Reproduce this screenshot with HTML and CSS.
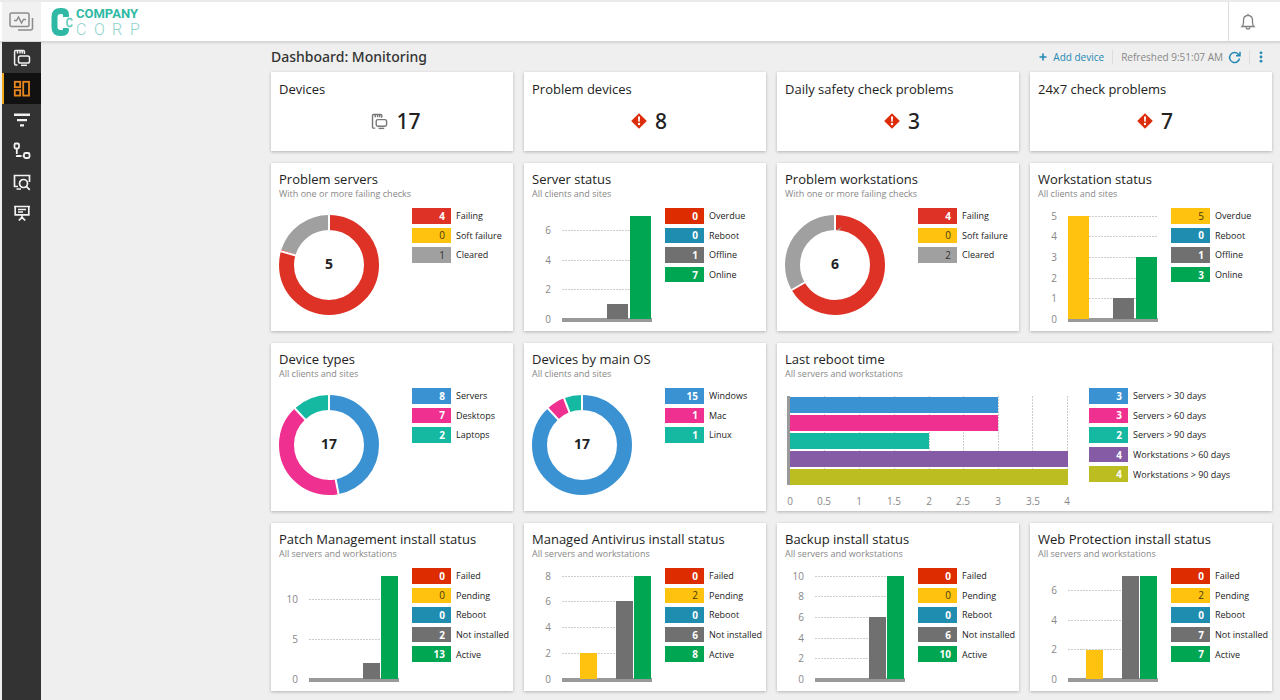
FILE: index.html
```html
<!DOCTYPE html>
<html lang="en">
<head>
<meta charset="utf-8">
<meta name="viewport" content="width=device-width, initial-scale=1">
<title>Dashboard: Monitoring</title>
<link rel="stylesheet" href="styles.css">
</head>
<body>
<svg class="defs" width="0" height="0" aria-hidden="true">
  <symbol id="alert" viewBox="0 0 16 16"><path d="M8 .2 15.8 8 8 15.8.2 8Z" fill="#dc2c0c"/><path d="M7 3.600h2l-.3 5.200H7.300Z" fill="#fff"/><circle cx="8" cy="11" r="1.200" fill="#fff"/></symbol>
  <symbol id="devices" viewBox="0 0 18 18"><g fill="none" stroke="currentColor" stroke-width="1.500"><path d="M4.500 16H2.600q-1 0-1-1V2.600q0-1 1-1h7.800q1 0 1 1V5M4.500 2v2.500M7 2v2.500M9.200 2v2.500"/><rect x="5.500" y="7" width="11" height="7" rx="1.800"/><path d="M8 16.300h6"/></g></symbol>
</svg>
<header class="topbar">
  <a class="product" href="#" aria-label="Monitoring">
    <svg width="25" height="20" viewBox="0 0 25 20" fill="none" stroke="#8c8c8c" stroke-width="1.500"><rect x="1" y="1" width="19" height="13.500" rx="1.500"/><path d="M5 8.500h2.500L9.500 5l3 6 2-3.500h2.500"/><path d="M23.500 6v10q0 2-2 2H9"/></svg>
  </a>
  <a class="brand" href="#" aria-label="Company Corp">
    <svg width="92" height="32" viewBox="0 0 92 32">
      <path d="M15 11V9q0-4-4-4H9.500Q3.500 5 3.500 11v10q0 6 6 6H11q4 0 4-4v-1" fill="none" stroke="#2fb9a5" stroke-width="6"/>
      <path d="M21 14.500q-.4-2-2.300-2-2.700 0-2.700 4t2.700 4q1.900 0 2.300-2" fill="none" stroke="#fff" stroke-width="4"/>
      <path d="M21 14.500q-.4-2-2.300-2-2.700 0-2.700 4t2.700 4q1.900 0 2.300-2" fill="none" stroke="#6fcfc2" stroke-width="1.800"/>
      <text class="brand-name" x="25" y="12">COMPANY</text>
      <text class="brand-sub" x="25 43 61 79" y="29">CORP</text>
    </svg>
  </a>
  <button class="bell" type="button" aria-label="Notifications">
    <svg width="16" height="18" viewBox="0 0 16 18" fill="none" stroke="#808080" stroke-width="1.300"><path d="M2 13.500q1.500-1.500 1.500-4V7Q3.500 2.800 8 2.300q4.500.5 4.500 4.700v2.500q0 2.500 1.500 4ZM8 .8v1.500M6 14.500q.4 1.600 2 1.600t2-1.600"/></svg>
  </button>
</header>
<div class="shell">
  <nav class="rail" aria-label="Main">
    <a href="#" aria-label="Devices"><svg width="18" height="18"><use href="#devices"/></svg></a>
    <a class="active" href="#" aria-label="Dashboard"><svg width="18" height="18" viewBox="0 0 18 18" fill="none" stroke="currentColor" stroke-width="1.800"><rect x="1.800" y="1.800" width="5.400" height="5.400"/><rect x="1.800" y="10.200" width="5.400" height="5.400"/><rect x="10.200" y="1.800" width="5.800" height="13.800"/></svg></a>
    <a href="#" aria-label="Filters"><svg width="18" height="18" viewBox="0 0 18 18" fill="currentColor"><path d="M1 2.500h16v2.400H1zM4 8h10v2.200H4zM7 13.200h4v2.200H7z"/></svg></a>
    <a href="#" aria-label="Workflow"><svg width="18" height="18" viewBox="0 0 18 18" fill="none" stroke="currentColor" stroke-width="1.800"><rect x="1.500" y="1.500" width="4.500" height="5" rx="1.200"/><rect x="11" y="11" width="5.500" height="5" rx="1.500"/><path d="M3.800 6.500v7.500H11" stroke-dasharray="5.500 1.200"/></svg></a>
    <a href="#" aria-label="Remote search"><svg width="18" height="18" viewBox="0 0 18 18" fill="none" stroke="currentColor" stroke-width="1.700"><path d="M5 13.500H1.500v-11h15V9M3.500 16H8"/><circle cx="10.500" cy="10.500" r="4"/><path d="m13.300 13.300 3.500 3.500"/></svg></a>
    <a href="#" aria-label="Reports"><svg width="18" height="18" viewBox="0 0 18 18" fill="none" stroke="currentColor" stroke-width="1.700"><path d="M1 2.500h16M2.200 2.500v8.400h13.600V2.500M5 5.500h8M5 8h5M9 10.900v3M5.800 16.500 9 13.300l3.200 3.200"/></svg></a>
  </nav>
  <main class="content">
    <div class="toolbar">
      <h1>Dashboard: Monitoring</h1>
      <div class="actions">
        <button class="add" type="button"><svg width="8" height="8" viewBox="0 0 8 8" stroke="currentColor" stroke-width="1.600"><path d="M4 .5v7M.5 4h7"/></svg>Add device</button>
        <div class="refreshed"><span>Refreshed 9:51:07 AM</span>
          <button type="button" aria-label="Refresh"><svg width="13" height="13" viewBox="0 0 13 13" fill="none" stroke="currentColor" stroke-width="1.500"><path d="M11.500 7.500A5 5 0 1 1 10.300 3.200L11.500 4.500M12 .8v4H8"/></svg></button>
        </div>
        <button class="more" type="button" aria-label="More"><svg width="4" height="12" viewBox="0 0 4 12" fill="currentColor"><circle cx="2" cy="1.800" r="1.400"/><circle cx="2" cy="6" r="1.400"/><circle cx="2" cy="10.200" r="1.400"/></svg></button>
      </div>
    </div>
    <div class="grid">
      <section class="card stat"><h2>Devices</h2><p class="total"><svg class="muted" width="17" height="17"><use href="#devices"/></svg>17</p></section>
      <section class="card stat"><h2>Problem devices</h2><p class="total"><svg width="16" height="16"><use href="#alert"/></svg>8</p></section>
      <section class="card stat"><h2>Daily safety check problems</h2><p class="total"><svg width="16" height="16"><use href="#alert"/></svg>3</p></section>
      <section class="card stat"><h2>24x7 check problems</h2><p class="total"><svg width="16" height="16"><use href="#alert"/></svg>7</p></section>

      <section class="card"><h2>Problem servers</h2><p class="sub">With one or more failing checks</p>
        <div class="body">
          <svg class="chart" width="133" height="120" viewBox="0 0 133 120">
            <g class="ring" transform="rotate(-90 50 57)"><circle cx="50" cy="57" r="42.500" pathLength="5" stroke="#de3226" stroke-dasharray="4 1"/><circle cx="50" cy="57" r="42.500" pathLength="5" stroke="#a0a0a0" stroke-dasharray="1 4" stroke-dashoffset="-4"/></g>
            <g class="cuts"><path d="M50 5v20"/><path d="M50 5v20" transform="rotate(286 50 57)"/></g>
            <text class="sum" x="50" y="61">5</text>
          </svg>
          <ul class="legend"><li><b class="red">4</b>Failing</li><li><b class="yellow">0</b>Soft failure</li><li><b class="silver">1</b>Cleared</li></ul>
        </div>
      </section>

      <section class="card"><h2>Server status</h2><p class="sub">All clients and sites</p>
        <div class="body">
          <svg class="chart" width="133" height="120" viewBox="0 0 133 120">
            <path class="lines" d="M30 22.500h90M30 52.500h90M30 81.500h90"/>
            <g class="ticks"><text x="19" y="26">6</text><text x="19" y="56">4</text><text x="19" y="85">2</text><text x="19" y="115">0</text></g>
            <rect class="axis" x="30" y="110" width="90" height="4"/>
            <rect x="75" y="96" width="21" height="15" fill="#707070"/><rect x="98" y="8" width="21" height="103" fill="#00a651"/>
          </svg>
          <ul class="legend"><li><b class="alert">0</b>Overdue</li><li><b class="teal">0</b>Reboot</li><li><b class="gray">1</b>Offline</li><li><b class="green">7</b>Online</li></ul>
        </div>
      </section>

      <section class="card"><h2>Problem workstations</h2><p class="sub">With one or more failing checks</p>
        <div class="body">
          <svg class="chart" width="133" height="120" viewBox="0 0 133 120">
            <g class="ring" transform="rotate(-90 50 57)"><circle cx="50" cy="57" r="42.500" pathLength="6" stroke="#de3226" stroke-dasharray="4 2"/><circle cx="50" cy="57" r="42.500" pathLength="6" stroke="#a0a0a0" stroke-dasharray="2 4" stroke-dashoffset="-4"/></g>
            <g class="cuts"><path d="M50 5v20"/><path d="M50 5v20" transform="rotate(240 50 57)"/></g>
            <text class="sum" x="50" y="61">6</text>
          </svg>
          <ul class="legend"><li><b class="red">4</b>Failing</li><li><b class="yellow">0</b>Soft failure</li><li><b class="silver">2</b>Cleared</li></ul>
        </div>
      </section>

      <section class="card"><h2>Workstation status</h2><p class="sub">All clients and sites</p>
        <div class="body">
          <svg class="chart" width="133" height="120" viewBox="0 0 133 120">
            <path class="lines" d="M30 8.500h90M30 28.500h90M30 49.500h90M30 70.500h90M30 90.500h90"/>
            <g class="ticks"><text x="19" y="12">5</text><text x="19" y="32">4</text><text x="19" y="53">3</text><text x="19" y="74">2</text><text x="19" y="94">1</text><text x="19" y="115">0</text></g>
            <rect class="axis" x="30" y="110" width="90" height="4"/>
            <rect x="30" y="8" width="21" height="103" fill="#ffc20e"/><rect x="75" y="90" width="21" height="21" fill="#707070"/><rect x="98" y="49" width="21" height="62" fill="#00a651"/>
          </svg>
          <ul class="legend"><li><b class="yellow">5</b>Overdue</li><li><b class="teal">0</b>Reboot</li><li><b class="gray">1</b>Offline</li><li><b class="green">3</b>Online</li></ul>
        </div>
      </section>

      <section class="card"><h2>Device types</h2><p class="sub">All clients and sites</p>
        <div class="body">
          <svg class="chart" width="133" height="120" viewBox="0 0 133 120">
            <g class="ring" transform="rotate(-90 50 57)"><circle cx="50" cy="57" r="42.500" pathLength="17" stroke="#3a92d2" stroke-dasharray="8 9"/><circle cx="50" cy="57" r="42.500" pathLength="17" stroke="#ef3090" stroke-dasharray="7 10" stroke-dashoffset="-8"/><circle cx="50" cy="57" r="42.500" pathLength="17" stroke="#15b8a0" stroke-dasharray="2 15" stroke-dashoffset="-15"/></g>
            <g class="cuts"><path d="M50 5v20"/><path d="M50 5v20" transform="rotate(169 50 57)"/><path d="M50 5v20" transform="rotate(317 50 57)"/></g>
            <text class="sum" x="50" y="61">17</text>
          </svg>
          <ul class="legend"><li><b class="blue">8</b>Servers</li><li><b class="pink">7</b>Desktops</li><li><b class="mint">2</b>Laptops</li></ul>
        </div>
      </section>

      <section class="card"><h2>Devices by main OS</h2><p class="sub">All clients and sites</p>
        <div class="body">
          <svg class="chart" width="133" height="120" viewBox="0 0 133 120">
            <g class="ring" transform="rotate(-90 50 57)"><circle cx="50" cy="57" r="42.500" pathLength="17" stroke="#3a92d2" stroke-dasharray="15 2"/><circle cx="50" cy="57" r="42.500" pathLength="17" stroke="#ef3090" stroke-dasharray="1 16" stroke-dashoffset="-15"/><circle cx="50" cy="57" r="42.500" pathLength="17" stroke="#15b8a0" stroke-dasharray="1 16" stroke-dashoffset="-16"/></g>
            <g class="cuts"><path d="M50 5v20"/><path d="M50 5v20" transform="rotate(317 50 57)"/><path d="M50 5v20" transform="rotate(339 50 57)"/></g>
            <text class="sum" x="50" y="61">17</text>
          </svg>
          <ul class="legend"><li><b class="blue">15</b>Windows</li><li><b class="pink">1</b>Mac</li><li><b class="mint">1</b>Linux</li></ul>
        </div>
      </section>

      <section class="card wide"><h2>Last reboot time</h2><p class="sub">All servers and workstations</p>
        <div class="body">
          <svg class="chart" width="304" height="120" viewBox="0 0 304 120">
            <path class="lines" d="M39.500 8v89M74.500 8v89M109.500 8v89M144.500 8v89M178.500 8v89M213.500 8v89M247.500 8v89M282.500 8v89"/>
            <rect class="axis" x="2" y="8" width="3" height="89"/>
            <rect x="5" y="9" width="208" height="16" fill="#3a92d2"/><rect x="5" y="27" width="208" height="16" fill="#ef3090"/><rect x="5" y="45" width="139" height="16" fill="#15b8a0"/><rect x="5" y="63" width="278" height="16" fill="#865ba5"/><rect x="5" y="81" width="278" height="16" fill="#bbbd20"/>
            <g class="ticks mid"><text x="5" y="117">0</text><text x="39" y="117">0.5</text><text x="74" y="117">1</text><text x="109" y="117">1.5</text><text x="144" y="117">2</text><text x="178" y="117">2.5</text><text x="213" y="117">3</text><text x="248" y="117">3.5</text><text x="282" y="117">4</text></g>
          </svg>
          <ul class="legend"><li><b class="blue">3</b>Servers &gt; 30 days</li><li><b class="pink">3</b>Servers &gt; 60 days</li><li><b class="mint">2</b>Servers &gt; 90 days</li><li><b class="purple">4</b>Workstations &gt; 60 days</li><li><b class="olive">4</b>Workstations &gt; 90 days</li></ul>
        </div>
      </section>

      <section class="card"><h2>Patch Management install status</h2><p class="sub">All servers and workstations</p>
        <div class="body">
          <svg class="chart" width="133" height="120" viewBox="0 0 133 120">
            <path class="lines" d="M30 31.500h90M30 71.500h90"/>
            <g class="ticks"><text x="19" y="35">10</text><text x="19" y="75">5</text><text x="19" y="115">0</text></g>
            <rect class="axis" x="30" y="110" width="90" height="4"/>
            <rect x="84" y="95" width="17" height="16" fill="#707070"/><rect x="102" y="8" width="17" height="103" fill="#00a651"/>
          </svg>
          <ul class="legend"><li><b class="alert">0</b>Failed</li><li><b class="yellow">0</b>Pending</li><li><b class="teal">0</b>Reboot</li><li><b class="gray">2</b>Not installed</li><li><b class="green">13</b>Active</li></ul>
        </div>
      </section>

      <section class="card"><h2>Managed Antivirus install status</h2><p class="sub">All servers and workstations</p>
        <div class="body">
          <svg class="chart" width="133" height="120" viewBox="0 0 133 120">
            <path class="lines" d="M30 8.500h90M30 33.500h90M30 59.500h90M30 85.500h90"/>
            <g class="ticks"><text x="19" y="12">8</text><text x="19" y="37">6</text><text x="19" y="63">4</text><text x="19" y="89">2</text><text x="19" y="115">0</text></g>
            <rect class="axis" x="30" y="110" width="90" height="4"/>
            <rect x="48" y="85" width="17" height="26" fill="#ffc20e"/><rect x="84" y="33" width="17" height="78" fill="#707070"/><rect x="102" y="8" width="17" height="103" fill="#00a651"/>
          </svg>
          <ul class="legend"><li><b class="alert">0</b>Failed</li><li><b class="yellow">2</b>Pending</li><li><b class="teal">0</b>Reboot</li><li><b class="gray">6</b>Not installed</li><li><b class="green">8</b>Active</li></ul>
        </div>
      </section>

      <section class="card"><h2>Backup install status</h2><p class="sub">All servers and workstations</p>
        <div class="body">
          <svg class="chart" width="133" height="120" viewBox="0 0 133 120">
            <path class="lines" d="M30 8.500h90M30 28.500h90M30 49.500h90M30 70.500h90M30 90.500h90"/>
            <g class="ticks"><text x="19" y="12">10</text><text x="19" y="32">8</text><text x="19" y="53">6</text><text x="19" y="74">4</text><text x="19" y="94">2</text><text x="19" y="115">0</text></g>
            <rect class="axis" x="30" y="110" width="90" height="4"/>
            <rect x="84" y="49" width="17" height="62" fill="#707070"/><rect x="102" y="8" width="17" height="103" fill="#00a651"/>
          </svg>
          <ul class="legend"><li><b class="alert">0</b>Failed</li><li><b class="yellow">0</b>Pending</li><li><b class="teal">0</b>Reboot</li><li><b class="gray">6</b>Not installed</li><li><b class="green">10</b>Active</li></ul>
        </div>
      </section>

      <section class="card"><h2>Web Protection install status</h2><p class="sub">All servers and workstations</p>
        <div class="body">
          <svg class="chart" width="133" height="120" viewBox="0 0 133 120">
            <path class="lines" d="M30 22.500h90M30 52.500h90M30 81.500h90"/>
            <g class="ticks"><text x="19" y="26">6</text><text x="19" y="56">4</text><text x="19" y="85">2</text><text x="19" y="115">0</text></g>
            <rect class="axis" x="30" y="110" width="90" height="4"/>
            <rect x="48" y="82" width="17" height="29" fill="#ffc20e"/><rect x="84" y="8" width="17" height="103" fill="#707070"/><rect x="102" y="8" width="17" height="103" fill="#00a651"/>
          </svg>
          <ul class="legend"><li><b class="alert">0</b>Failed</li><li><b class="yellow">2</b>Pending</li><li><b class="teal">0</b>Reboot</li><li><b class="gray">7</b>Not installed</li><li><b class="green">7</b>Active</li></ul>
        </div>
      </section>
    </div>
  </main>
</div>
</body>
</html>
```
FILE: styles.css
```css
* { box-sizing: border-box; }
body {
  margin: 0;
  min-height: 100vh;
  display: flex;
  flex-direction: column;
  background: #efefef;
  color: #222;
  font-family: "Open Sans", "Noto Sans", sans-serif;
  font-size: 10px;
}
h1, h2, p, ul { margin: 0; padding: 0; }
ul { list-style: none; }
svg { display: block; }
.defs { position: absolute; }
a { color: inherit; text-decoration: none; }
button { border: 0; padding: 0; background: none; font: inherit; color: inherit; cursor: pointer; }

.topbar {
  display: flex;
  height: 42px;
  padding-left: 2px;
  background: #fff;
  border-top: 2px solid #ebebeb;
  border-bottom: 1px solid #d6d6d6;
  box-shadow: 0 1px 2px rgba(0, 0, 0, .12);
}
.product {
  display: flex;
  align-items: center;
  justify-content: center;
  width: 39px;
  background: #f1f1f1;
}
.brand { padding: 4px 0 0 10px; margin-right: auto; }
.brand-name { font: 700 13px Roboto, sans-serif; fill: #2fb9a5; }
.brand-sub { font: 300 16px Roboto, sans-serif; fill: #8fd3cd; }
.bell {
  display: flex;
  align-items: center;
  width: 52px;
  padding-left: 11px;
  border-left: 1px solid #ddd;
}

.shell { display: flex; flex: 1; }
.rail {
  width: 39px;
  margin-left: 2px;
  background: #333;
  color: #f2f2f2;
  flex: none;
}
.rail a {
  display: flex;
  align-items: center;
  justify-content: center;
  height: 31px;
  padding-right: 2px;
  border-left: 2px solid transparent;
}
.rail .active { background: #111; color: #e8871e; border-left-color: #f0a818; }

.content { flex: 1; min-width: 0; padding: 0 8px 9px 230px; }
.toolbar {
  display: flex;
  align-items: center;
  justify-content: space-between;
  height: 30px;
}
h1 {
  font-family: "Noto Sans", sans-serif;
  font-size: 14px;
  font-weight: 500;
  line-height: 20px;
  color: #333;
}
.actions { display: flex; align-items: center; }
.add { display: flex; align-items: center; gap: 6px; color: #2389b5; padding-right: 8px; }
.refreshed {
  display: flex;
  align-items: center;
  gap: 5px;
  padding: 0 8px;
  border: solid #ddd;
  border-width: 0 1px;
  color: #888;
}
.refreshed button, .more { color: #2389b5; }
.more { padding: 0 9px; }

.grid { display: grid; grid-template-columns: repeat(4, minmax(0, 1fr)); gap: 12px 11px; }
.card {
  min-height: 168px;
  padding: 7px 0 0 8px;
  background: #fff;
  box-shadow: 0 1px 3px rgba(0, 0, 0, .25);
}
.stat { min-height: 79px; padding-top: 8px; }
.wide { grid-column: span 2; }
h2 { font-size: 13px; font-weight: 500; line-height: 18px; white-space: nowrap; }
.sub { font-size: 9px; line-height: 12px; color: #888; }
.total {
  display: flex;
  align-items: center;
  justify-content: center;
  gap: 8px;
  padding-top: 8px;
  font-family: "Noto Sans", sans-serif;
  font-size: 21px;
  font-weight: 500;
  line-height: 30px;
  color: #222;
}
.muted { color: #777; }

.body { display: flex; align-items: flex-start; padding-top: 8px; }
.chart { flex: none; }
.ring circle { fill: none; stroke-width: 15; }
.cuts { fill: none; stroke: #fff; stroke-width: 2; }
.sum { font-size: 14px; font-weight: 700; text-anchor: middle; fill: #222; }
.lines { fill: none; stroke: #ccc; stroke-dasharray: 2 1; }
.ticks { font-size: 10px; text-anchor: end; fill: #888; }
.mid { text-anchor: middle; }
.axis { fill: #999; }

.legend {
  display: grid;
  grid-template-rows: repeat(5, 1fr);
  row-gap: 4px;
  height: 94px;
  font-size: 9px;
  font-weight: 500;
  white-space: nowrap;
}
.legend li { display: flex; align-items: center; gap: 5px; }
.legend b {
  display: flex;
  align-items: center;
  justify-content: flex-end;
  width: 39px;
  height: 100%;
  padding-right: 6px;
  font-size: 10px;
  font-weight: 700;
  color: #fff;
}
.legend .red { background: #de3226; }
.legend .alert { background: #dc2c00; }
.legend .yellow { background: #ffc20e; color: #443a10; font-weight: 500; }
.legend .silver { background: #a0a0a0; color: #333; font-weight: 500; }
.legend .teal { background: #1f8db0; }
.legend .gray { background: #707070; }
.legend .green { background: #00a651; }
.legend .blue { background: #3a92d2; }
.legend .pink { background: #ef3090; }
.legend .mint { background: #15b8a0; }
.legend .purple { background: #865ba5; }
.legend .olive { background: #bbbd20; }
```
